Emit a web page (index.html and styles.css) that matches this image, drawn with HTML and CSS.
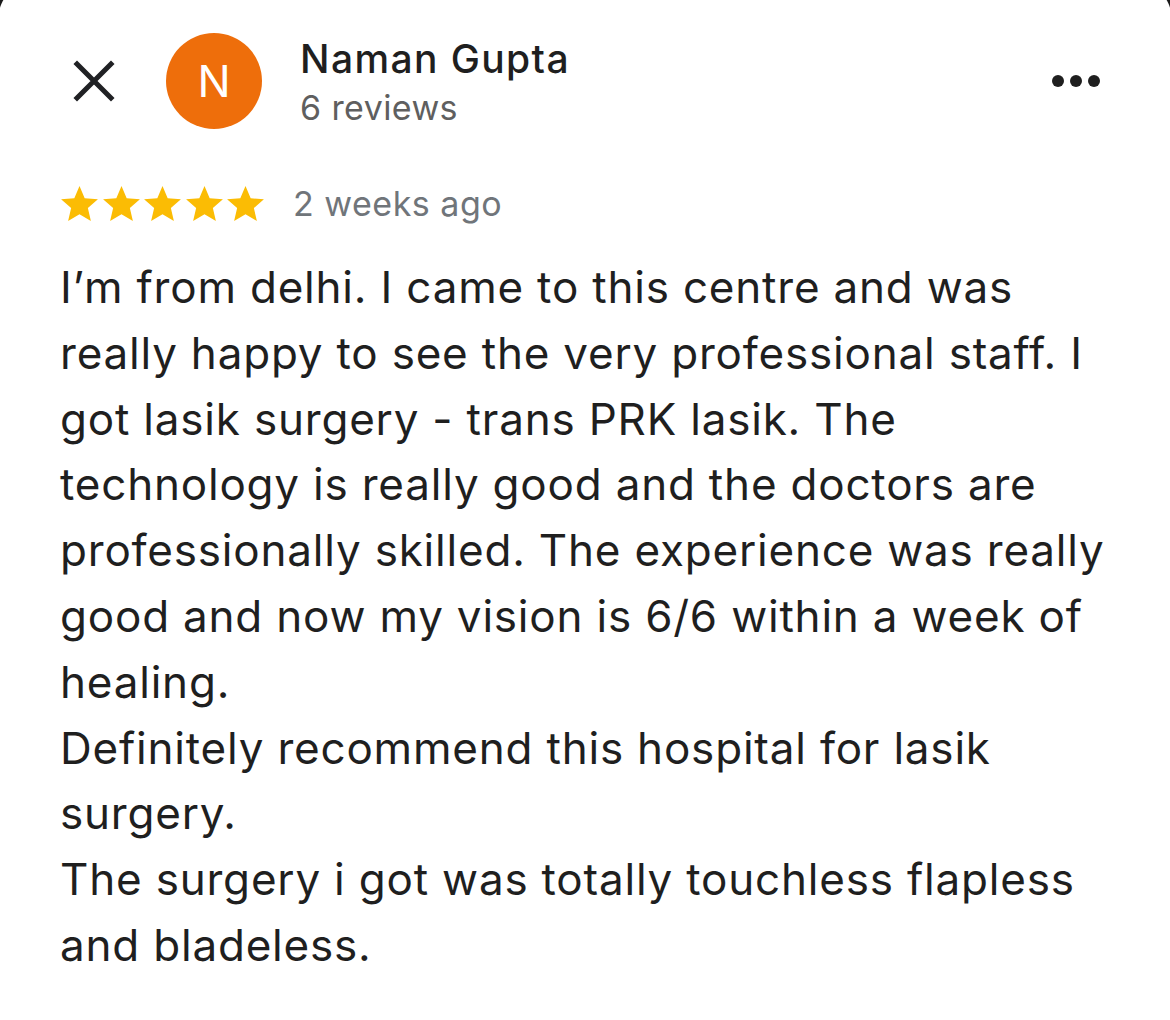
FILE: index.html
```html
<!DOCTYPE html>
<html lang="en">
<head>
<meta charset="utf-8">
<title>Review</title>
<link rel="stylesheet" href="styles.css">
</head>
<body>
<div class="sheet">
  <header class="header">
    <button class="close" aria-label="Close">
      <svg viewBox="0 0 42 42" width="42" height="42"><path d="M4 4L38 38M38 4L4 38" stroke="#202124" stroke-width="5" stroke-linecap="square" fill="none"/></svg>
    </button>
    <div class="avatar">N</div>
    <div class="author">
      <div class="name">Naman Gupta</div>
      <div class="count">6 reviews</div>
    </div>
    <div class="more" aria-label="More options"><span></span><span></span><span></span></div>
  </header>
  <div class="meta">
    <div class="stars">
      <svg viewBox="2 2 20 19" width="37" height="35"><path d="M12 17.27L18.18 21l-1.64-7.03L22 9.24l-7.19-.61L12 2 9.19 8.63 2 9.24l5.46 4.73L5.82 21z"/></svg>
      <svg viewBox="2 2 20 19" width="37" height="35"><path d="M12 17.27L18.18 21l-1.64-7.03L22 9.24l-7.19-.61L12 2 9.19 8.63 2 9.24l5.46 4.73L5.82 21z"/></svg>
      <svg viewBox="2 2 20 19" width="37" height="35"><path d="M12 17.27L18.18 21l-1.64-7.03L22 9.24l-7.19-.61L12 2 9.19 8.63 2 9.24l5.46 4.73L5.82 21z"/></svg>
      <svg viewBox="2 2 20 19" width="37" height="35"><path d="M12 17.27L18.18 21l-1.64-7.03L22 9.24l-7.19-.61L12 2 9.19 8.63 2 9.24l5.46 4.73L5.82 21z"/></svg>
      <svg viewBox="2 2 20 19" width="37" height="35"><path d="M12 17.27L18.18 21l-1.64-7.03L22 9.24l-7.19-.61L12 2 9.19 8.63 2 9.24l5.46 4.73L5.82 21z"/></svg>
    </div>
    <span class="when">2 weeks ago</span>
  </div>
  <p class="review">I’m from delhi. I came to this centre and was really happy to see the very professional staff. I got lasik surgery - trans PRK lasik. The technology is really good and the doctors are professionally skilled. The experience was really good and now my vision is 6/6 within a week of healing.
Definitely recommend this hospital for lasik surgery.
The surgery i got was totally touchless flapless and bladeless.</p>
</div>
</body>
</html>
```

FILE: styles.css
```css
html {
  background: #1a1a1a;
}
body {
  margin: 0;
  font-family: Inter, "Noto Sans", "Liberation Sans", sans-serif;
}
.sheet {
  background: #fff;
  margin: -20px -2px 0;
  padding-top: 20px;
  border-radius: 40px 40px 0 0;
  min-height: 1040px;
  box-sizing: border-box;
}
.header {
  display: flex;
  align-items: center;
  margin-top: 33px;
  padding: 0 72px 0 75px;
  height: 96px;
}
.close {
  width: 42px;
  height: 42px;
  padding: 0;
  border: 0;
  background: none;
  display: flex;
}
.avatar {
  width: 96px;
  height: 96px;
  border-radius: 50%;
  background: #ee6e0b;
  color: #fff;
  font-size: 44px;
  display: flex;
  align-items: center;
  justify-content: center;
  margin-left: 51px;
}
.author {
  margin-left: 38px;
  padding-top: 5px;
  flex: 1;
}
.name {
  font-size: 39px;
  font-weight: 500;
  letter-spacing: 1.4px;
  line-height: 48px;
  color: #1f1f1f;
}
.count {
  font-size: 34px;
  letter-spacing: 0.4px;
  line-height: 50px;
  color: #5f5f5f;
}
.more {
  display: flex;
  gap: 6px;
}
.more span {
  width: 12px;
  height: 12px;
  border-radius: 50%;
  background: #1f1f1f;
}
.meta {
  display: flex;
  align-items: center;
  margin-top: 56px;
  padding-left: 63px;
  height: 36px;
}
.stars {
  display: flex;
  gap: 4.5px;
}
.stars svg {
  fill: #fbbc04;
}
.when {
  margin-left: 29px;
  font-size: 34px;
  letter-spacing: 0.5px;
  color: #70757a;
}
.review {
  margin: 34px 0 0;
  padding: 0 62px;
  font-size: 44px;
  letter-spacing: 0.8px;
  line-height: 65.8px;
  color: #1f1f1f;
  white-space: pre-line;
}
```
